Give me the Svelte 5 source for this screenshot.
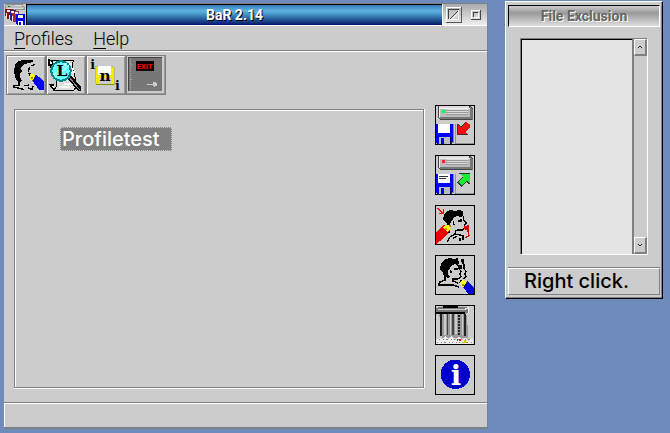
<script>
    let profiles = ["Profiletest"];
    let selected = "Profiletest";

    const tools = [
        { name: "edit", label: "Edit profile" },
        { name: "log", label: "View log" },
        { name: "ini", label: "Save settings" },
        { name: "exit", label: "Exit" },
    ];

    const actions = [
        { name: "backup", label: "Backup" },
        { name: "restore", label: "Restore" },
        { name: "rename", label: "Rename profile" },
        { name: "copy", label: "Copy profile" },
        { name: "trash", label: "Delete profile" },
        { name: "info", label: "About" },
    ];
</script>

<!-- All icons are drawn on a 120 grid, three units to a pixel, less the 1px border -->
{#snippet pencil(x, y, color)}
    <g transform="translate({x} {y})">
        <path d="M0 0H9V8H2Z" fill="#000" />
        <path d="M3 9L9 0L25 8L27 15L15 26L6 21Z" fill="#ff0" />
        <path d="M9 12H15V18H9Z" fill="#a80" />
        <path d="M24 5L46 24V51H33L13 24Z" fill={color} />
        <path d="M24 5L13 24" stroke="#000" stroke-width="2" />
    </g>
{/snippet}

{#snippet drive(light)}
    <path d="M9 3H105L115 9V45H18L9 39Z" fill="#444" />
    <path d="M12 3H102L105 12H12Z" fill="#ddd" />
    <path d="M12 9H105V39H12Z" fill="#bbb" />
    <path d="M105 6L114 12V45L105 39Z" fill="#777" />
    <path d="M12 36H108V43H16Z" fill="#777" />
    <path d="M13 9V39M12 10H104" stroke="#eee" stroke-width="3" />
    <path d="M34 16H98M34 22H98M34 28H98" stroke="#999" stroke-width="3" />
    <path d="M36 13H98M36 19H98M36 25H98" stroke="#eee" stroke-width="2" />
    <rect x="20" y="16" width="9" height="7" fill={light} />
{/snippet}

{#snippet floppy(written)}
    <path d="M1 57H54V111L48 117H6L1 111Z" fill="#00f" />
    <path d="M54 57H58V115H49L54 110Z" fill="#888" />
    <path d="M8 57H46V84H8Z" fill="#fff" />
    <path d="M13 95H45V116H13Z" fill="#bbb" />
    <path d="M18 99H27V116H18Z" fill="#00f" />
    <path d="M45 96V117" stroke="#005" stroke-width="3" />
    {#if written}
        <path d="M13 64H40M13 71H34" stroke="#333" stroke-width="4" />
    {/if}
{/snippet}

{#snippet icon(name)}
    <svg viewBox="3 3 114 114" fill="none" aria-hidden="true">
        {#if name === "edit"}
            <path d="M80 15H54L36 18L27 30L24 48L27 66L33 78L40 82L49 78L42 66V54L48 48L45 39L51 30L66 24L81 21Z" fill="#000" />
            <path d="M39 78V90L24 93V99M24 96L48 102L54 105M66 99L78 103M81 93L78 105M70 36L67 51M87 28L75 33M54 92L69 90" stroke="#000" stroke-width="4" />
            {@render pencil(67, 54, "#00f")}
        {:else if name === "log"}
            <path d="M12 15H84L78 27L93 93L84 105H24L33 93L24 36H12Z" fill="#ddd" stroke="#000" stroke-width="3" />
            <path d="M9 15V30H24L18 18ZM24 90H12L24 105" fill="#eee" stroke="#000" stroke-width="4" />
            <path d="M66 27H78M72 42H84M75 51H87M54 87H75M39 96H72" stroke="#fff" stroke-width="5" />
            <path d="M64 71L74 61L105 94V109H98Z" fill="#000" />
            <path d="M70 67L100 104" stroke="#888" stroke-width="3" />
            <circle cx="45" cy="48" r="29" fill="#6ff" stroke="#088" stroke-width="6" />
            <path d="M23 60L62 25M28 66L69 31" stroke="#bff" stroke-width="4" />
            <text class="serif" x="48" y="64" font-size="47">L</text>
        {:else if name === "ini"}
            <path d="M28 34H80L85 39V89H34L28 83Z" fill="#ee0" stroke="#aa7" stroke-width="2" />
            <path d="M37 34H76V61H37Z" fill="#fff" />
            <path d="M43 69H75V89H43Z" fill="#ccc" />
            <path d="M30 88H83" stroke="#880" stroke-width="3" />
            <text class="serif" x="57" y="79" font-size="46">n</text>
            <text class="serif" x="20" y="43" font-size="38">i</text>
            <text class="serif" x="94" y="104" font-size="38">i</text>
        {:else if name === "exit"}
            <path d="M8 6H108V109H8Z" fill="#777" />
            <path d="M8 109V7H109" stroke="#444" stroke-width="3" />
            <path d="M14 12V106M14 27H19M14 72H19" stroke="#aaa" stroke-width="3" stroke-dasharray="4 2" />
            <path d="M29 17H83V48H29Z" fill="#100" />
            <text class="sign" x="56" y="41" font-size="23">EXIT</text>
            <path d="M62 88H84" stroke="#ccc" stroke-width="4" />
            <circle cx="86" cy="88" r="7" fill="#ccc" />
        {:else if name === "backup"}
            {@render drive("#0f4")}
            {@render floppy(false)}
            <path d="M61 57V118M61 116H118" stroke="#777" stroke-width="2" />
            <path d="M67 58V87H97L91 81L106 66V57H100L93 51L79 66L70 57Z" fill="#e11" />
            <path d="M66 57V88H99M70 57L78 66L92 52" stroke="#333" stroke-width="3" />
        {:else if name === "restore"}
            {@render drive("#f22")}
            {@render floppy(true)}
            <path d="M61 57V118M61 116H118" stroke="#777" stroke-width="2" />
            <path d="M76 57H104V86L96 78L80 93L69 82L84 66Z" fill="#1e3" />
            <path d="M72 56H105M84 66L69 82L80 93L96 79L104 87" stroke="#333" stroke-width="3" />
        {:else if name === "rename"}
            <path d="M30 51L24 42L27 30L33 21L45 15L60 18L72 15L84 18V33L75 36L66 33L57 36L54 45L48 48L45 63H39L36 54Z" fill="#000" />
            <path d="M85 33V45L94 54L88 60L91 69L82 75H66M70 48H81M78 42V49M55 48L57 60M42 75V84M63 75L60 87L75 90L84 93V106M57 90L45 96L36 111M54 100L66 93M75 99V108" stroke="#000" stroke-width="4" />
            <path d="M7 9L24 25M24 13V26H11" stroke="#e11" stroke-width="3" />
            <path d="M88 63H102V75H93L87 72Z" fill="#d00" />
            <path d="M99 60V78L102 93L90 99" stroke="#d00" stroke-width="4" />
            <path d="M2 84L27 59L45 76L33 93L3 118Z" fill="#e00" />
            <path d="M25 67L33 60H45V72L36 81Z" fill="#ff0" />
            <path d="M30 69H36V75H30ZM42 60H48V66H42Z" fill="#c80" />
        {:else if name === "copy"}
            <path d="M24 54L15 42L18 24L27 15L42 9L57 12L69 9L72 24L69 33L60 27L48 33L45 42L39 45V60L45 66L39 69L27 63Z" fill="#000" />
            <path d="M78 12H87V27H81ZM75 30H81V42H75Z" fill="#000" />
            <path d="M72 30V42L78 48L75 57L78 66L69 72H54M87 27V42L93 48L90 57L93 66L84 72M58 42H70M47 45L48 54M30 63V75L15 81L12 90H54L72 96M54 69V78L69 84M12 84V93M78 75L75 84" stroke="#000" stroke-width="4" />
            {@render pencil(73, 74, "#00d")}
        {:else if name === "trash"}
            <path d="M12 24H96L99 98H21Z" fill="#999" />
            <path d="M2 12L12 6H93L102 15V25H3Z" fill="#777" />
            <path d="M24 3H69V9H24ZM3 21H90V26H3Z" fill="#000" />
            <path d="M9 12H90" stroke="#ccc" stroke-width="3" />
            <path d="M19 27V93M91 27V93" stroke="#222" stroke-width="6" />
            <path d="M38 27V91M54 27V91" stroke="#444" stroke-width="4" />
            <path d="M29 27V91M46 27V91M63 27V87M82 27V90" stroke="#ccc" stroke-width="5" />
            <path d="M72 30V90" stroke="#222" stroke-width="4" stroke-dasharray="5 4" />
            <path d="M90 12L101 9V22L93 30" stroke="#eee" stroke-width="4" />
            <path d="M3 105L15 98L21 105L30 93L39 102L51 93L60 105L72 96L81 105L90 99L99 108L112 99L116 118H3Z" fill="#eee" />
            <path d="M6 111H117M12 104H114" stroke="#888" stroke-width="3" stroke-dasharray="4 9 3 6" />
            <path d="M66 105H78" stroke="#c22" stroke-width="5" stroke-dasharray="4 3" />
            <path d="M82 112H97M89 105V113" stroke="#cc1" stroke-width="5" />
        {:else if name === "info"}
            <circle cx="61" cy="58" r="44" fill="#00c" />
            <text class="serif light" x="63" y="89" font-size="82">i</text>
        {:else if name === "app"}
            <path d="M6 3H105L114 18V33H9Z" fill="#bbb" stroke="#777" stroke-width="4" />
            <path d="M12 24H105M60 9H102" stroke="#ddd" stroke-width="6" />
            <rect x="18" y="10" width="12" height="6" fill="#080" />
            <path d="M4 30H48V84H16L4 66Z" fill="#811" />
            <path d="M24 36H66V96H36L24 78Z" fill="#228" />
            <path d="M42 42H84V102H50L42 84Z" fill="#933" />
            <path d="M14 32H32V44H14ZM36 38H54V50H36ZM58 44H76V58H58Z" fill="#eee" />
            <path d="M11 54V78M30 60V87M47 66V96" stroke="#fff" stroke-width="5" />
            <path d="M63 57H117V117H69L63 110Z" fill="#00e" />
            <path d="M75 60H105V80H75ZM78 96H105V117H78Z" fill="#fff" />
            <path d="M83 101H92V117H83Z" fill="#00e" />
        {/if}
    </svg>
{/snippet}

<div class="desktop">
    <main class="window">
        <header class="titlebar">
            <div class="app-icon">{@render icon("app")}</div>
            <h1>BaR 2.14</h1>
            <div class="controls">
                <button class="zoom" aria-label="Maximize">
                    <svg viewBox="0 0 16 16" fill="none">
                        <path d="M0.5 16V0.5H16" stroke="#fff" />
                        <path d="M0 15.5H15.5V0" stroke="#555" />
                        <path d="M2.5 12V2.5H13" stroke="#444" />
                        <path d="M3 12.5H12.5V3" stroke="#fff" />
                        <path d="M4 12L12 4" stroke="#444" />
                        <path d="M5 13L13 5" stroke="#fff" />
                    </svg>
                </button>
                <button class="iconify" aria-label="Minimize">
                    <svg viewBox="0 0 10 10" fill="none">
                        <path d="M0.5 10V0.5H10" stroke="#fff" />
                        <path d="M0 9.5H9.5V0" stroke="#444" />
                        <path d="M2.5 7V2.5H7" stroke="#444" />
                        <path d="M3 7.5H7.5V3" stroke="#fff" />
                    </svg>
                </button>
            </div>
        </header>

        <nav class="menu">
            <button><u>P</u>rofiles</button>
            <button><u>H</u>elp</button>
        </nav>

        <div class="toolbar">
            {#each tools as tool}
                <button class="tool" class:raised={tool.name === "exit"} aria-label={tool.label}>
                    {@render icon(tool.name)}
                </button>
            {/each}
        </div>

        <div class="content">
            <section class="profiles" aria-label="Profiles">
                {#each profiles as profile}
                    <button
                        class="profile"
                        class:selected={profile === selected}
                        on:click={() => (selected = profile)}
                    >
                        {profile}
                    </button>
                {/each}
            </section>

            <div class="actions">
                {#each actions as action}
                    <button class="action" aria-label={action.label}>
                        {@render icon(action.name)}
                    </button>
                {/each}
            </div>
        </div>

        <footer class="status"></footer>
    </main>

    <aside class="exclusion">
        <h2>File Exclusion</h2>
        <div class="list">
            <div class="files"></div>
            <div class="scrollbar">
                <button aria-label="Scroll up">
                    <svg viewBox="0 0 7 5" fill="none"><path d="M1 4L3.5 1L6 4" stroke="#000" /></svg>
                </button>
                <button aria-label="Scroll down">
                    <svg viewBox="0 0 7 5" fill="none"><path d="M1 1L3.5 4L6 1" stroke="#000" /></svg>
                </button>
            </div>
        </div>
        <p class="hint">Right click.</p>
    </aside>
</div>

<style>
    :global(body) {
        background: #6f8abd;
    }

    .desktop {
        --face: #ccc;
        --shade: #808080;

        display: flex;
        align-items: flex-start;
        gap: 17px;
        padding: 1px 7px 5px 4px;
        color: #000;
    }

    .desktop,
    .desktop * {
        box-sizing: border-box;
    }

    button {
        padding: 0;
        border: 0;
        background: none;
        color: inherit;
        font: inherit;
    }

    svg {
        display: block;
        width: 100%;
        height: 100%;
        shape-rendering: crispEdges;
    }

    /* Lettering inside the icons */
    text {
        text-anchor: middle;
    }

    .serif {
        fill: #000;
        font-family: "DejaVu Serif", serif;
        font-weight: bold;
    }

    .serif.light {
        fill: #fff;
    }

    .sign {
        fill: #f00;
        font-family: Roboto, sans-serif;
        font-weight: bold;
    }

    /* Main window */
    .window {
        flex: 1;
        min-width: 0;
        margin-top: 2px;
        background: var(--face);
        border: 1px solid var(--shade);
        border-left: 0;
        border-bottom-width: 2px;
    }

    .titlebar {
        display: flex;
        height: 22px;
        border-bottom: 1px solid #fff;
    }

    .app-icon {
        width: 23px;
        padding: 0 1px;
        background: var(--face);
        border-right: 1px solid #000;
    }

    .titlebar h1,
    .exclusion h2 {
        margin: 0;
        font: bold 14px/20px Roboto, sans-serif;
        text-align: center;
    }

    .titlebar h1 {
        flex: 1;
        border-top: 1px solid #000;
        background: linear-gradient(#3c78b8, #5cb4dc 30%, #4898c8 45%, #205090 75%, #0a1468);
        color: #fff;
        text-shadow: 1px 1px #000;
    }

    .controls {
        display: flex;
        align-items: center;
        gap: 9px;
        width: 45px;
        padding-left: 3px;
        border-left: 1px solid #fff;
        background: linear-gradient(#aaa, #eee);
    }

    .zoom {
        width: 16px;
        height: 16px;
    }

    .iconify {
        width: 10px;
        height: 10px;
    }

    .menu {
        display: flex;
        gap: 20px;
        height: 25px;
        padding: 0 10px;
        border-bottom: 1px solid var(--shade);
        font: 300 18px/23px Roboto, sans-serif;
    }

    .menu u {
        text-decoration-thickness: 1px;
        text-underline-offset: 3px;
    }

    .toolbar {
        display: flex;
        padding: 3px 2px;
        border-top: 1px solid #fff;
    }

    .tool {
        width: 40px;
        height: 40px;
        border: 1px solid var(--shade);
        box-shadow: inset 1px 1px #fff, inset -1px -1px #999;
    }

    .tool.raised {
        box-shadow: inset -1px -1px #999;
    }

    .content {
        display: flex;
        gap: 11px;
        padding: 7px 12px 7px 10px;
    }

    .profiles {
        flex: 1;
        margin: 4px 0 7px;
        padding: 17px 45px;
        border: 1px solid var(--shade);
        box-shadow: inset 1px 1px #fff, 0 1px #fff, 1px 0 #fff;
        font: 500 20px/22px Inter, sans-serif;
    }

    .profile {
        display: block;
        padding: 0 11px 0 1px;
        border: 1px dotted transparent;
    }

    .profile.selected {
        border-color: var(--face);
        background: var(--shade);
        color: #fff;
    }

    .actions {
        display: flex;
        flex-direction: column;
        gap: 10px;
    }

    .action {
        width: 40px;
        height: 40px;
        border: 1px solid #000;
    }

    .status {
        height: 25px;
        border-top: 1px solid var(--shade);
        box-shadow: inset 1px 1px #fff;
    }

    /* File exclusion window */
    .exclusion {
        width: 158px;
        padding: 3px 2px;
        background: var(--face);
        border: 1px solid #fff;
        border-right-color: #000;
        border-bottom-color: #000;
        box-shadow: inset -1px -1px var(--shade);
    }

    .exclusion h2 {
        border: 1px solid #000;
        border-right-color: #fff;
        border-bottom-color: #fff;
        background: linear-gradient(#ccc, #999 35%, #ddd);
        color: #666;
        text-shadow: 1px 1px #fff;
    }

    .list {
        display: flex;
        height: 217px;
        margin: 11px 12px 13px;
        border: 1px solid var(--shade);
        border-right-color: #fff;
        border-bottom-color: #fff;
    }

    .files {
        flex: 1;
        border-top: 1px solid #000;
        border-left: 1px solid #000;
        background: #e5e5e5;
    }

    .scrollbar {
        display: flex;
        flex-direction: column;
        justify-content: space-between;
        width: 15px;
        border-left: 2px solid var(--shade);
        background: var(--face);
    }

    .scrollbar button {
        height: 17px;
        padding: 5px 2px;
        border: 1px solid #fff;
        border-right: 2px solid var(--shade);
        border-bottom: 2px solid var(--shade);
        background: var(--face);
    }

    .hint {
        margin: 0;
        padding: 0 15px;
        border: 1px solid #fff;
        border-right-color: var(--shade);
        border-bottom-color: var(--shade);
        box-shadow: 0 -1px var(--shade);
        font: 500 20px/25px Inter, sans-serif;
        white-space: nowrap;
    }
</style>
